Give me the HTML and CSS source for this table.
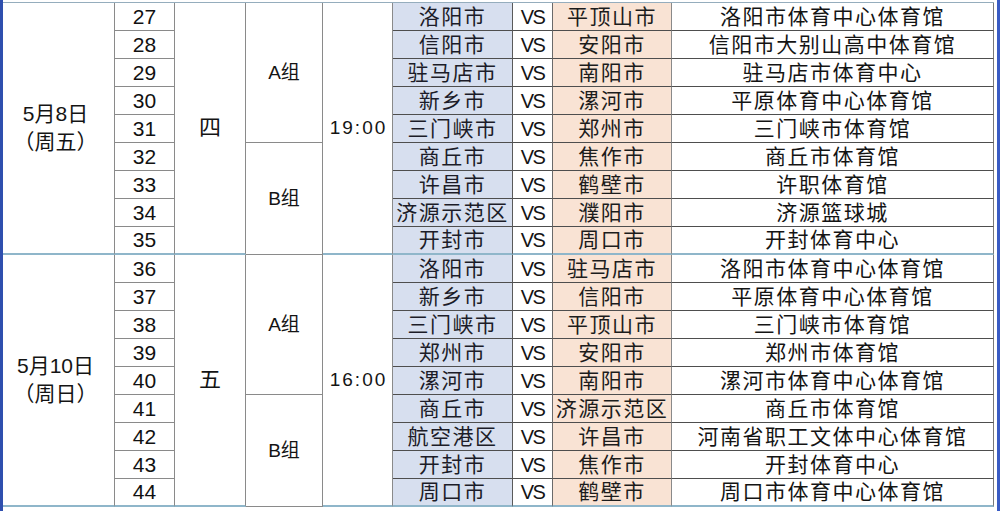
FILE: index.html
```html
<!DOCTYPE html>
<html lang="zh-CN">
<head>
<meta charset="utf-8">
<title>赛程表</title>
<link rel="stylesheet" href="styles.css">
</head>
<body>
<div class="frame">
<table class="sched">
<colgroup>
<col class="c-date"><col class="c-no"><col class="c-wk"><col class="c-grp"><col class="c-time"><col class="c-home"><col class="c-vs"><col class="c-away"><col class="c-venue">
</colgroup>
<tbody>
<tr>
<td class="date" rowspan="9">5月8日<br>（周五）</td>
<td class="no">27</td>
<td class="wk" rowspan="9">四</td>
<td class="grp" rowspan="5">A组</td>
<td class="time" rowspan="9">19:00</td>
<td class="home">洛阳市</td><td class="vs">VS</td><td class="away">平顶山市</td><td class="venue">洛阳市体育中心体育馆</td>
</tr>
<tr><td class="no">28</td><td class="home">信阳市</td><td class="vs">VS</td><td class="away">安阳市</td><td class="venue">信阳市大别山高中体育馆</td></tr>
<tr><td class="no">29</td><td class="home">驻马店市</td><td class="vs">VS</td><td class="away">南阳市</td><td class="venue">驻马店市体育中心</td></tr>
<tr><td class="no">30</td><td class="home">新乡市</td><td class="vs">VS</td><td class="away">漯河市</td><td class="venue">平原体育中心体育馆</td></tr>
<tr><td class="no">31</td><td class="home">三门峡市</td><td class="vs">VS</td><td class="away">郑州市</td><td class="venue">三门峡市体育馆</td></tr>
<tr><td class="no">32</td><td class="grp" rowspan="4">B组</td><td class="home">商丘市</td><td class="vs">VS</td><td class="away">焦作市</td><td class="venue">商丘市体育馆</td></tr>
<tr><td class="no">33</td><td class="home">许昌市</td><td class="vs">VS</td><td class="away">鹤壁市</td><td class="venue">许职体育馆</td></tr>
<tr><td class="no">34</td><td class="home">济源示范区</td><td class="vs">VS</td><td class="away">濮阳市</td><td class="venue">济源篮球城</td></tr>
<tr class="last"><td class="no">35</td><td class="home">开封市</td><td class="vs">VS</td><td class="away">周口市</td><td class="venue">开封体育中心</td></tr>

<tr class="first">
<td class="date" rowspan="9">5月10日<br>（周日）</td>
<td class="no">36</td>
<td class="wk" rowspan="9">五</td>
<td class="grp" rowspan="5">A组</td>
<td class="time" rowspan="9">16:00</td>
<td class="home">洛阳市</td><td class="vs">VS</td><td class="away">驻马店市</td><td class="venue">洛阳市体育中心体育馆</td>
</tr>
<tr><td class="no">37</td><td class="home">新乡市</td><td class="vs">VS</td><td class="away">信阳市</td><td class="venue">平原体育中心体育馆</td></tr>
<tr><td class="no">38</td><td class="home">三门峡市</td><td class="vs">VS</td><td class="away">平顶山市</td><td class="venue">三门峡市体育馆</td></tr>
<tr><td class="no">39</td><td class="home">郑州市</td><td class="vs">VS</td><td class="away">安阳市</td><td class="venue">郑州市体育馆</td></tr>
<tr><td class="no">40</td><td class="home">漯河市</td><td class="vs">VS</td><td class="away">南阳市</td><td class="venue">漯河市体育中心体育馆</td></tr>
<tr><td class="no">41</td><td class="grp" rowspan="4">B组</td><td class="home">商丘市</td><td class="vs">VS</td><td class="away">济源示范区</td><td class="venue">商丘市体育馆</td></tr>
<tr><td class="no">42</td><td class="home">航空港区</td><td class="vs">VS</td><td class="away">许昌市</td><td class="venue">河南省职工文体中心体育馆</td></tr>
<tr><td class="no">43</td><td class="home">开封市</td><td class="vs">VS</td><td class="away">焦作市</td><td class="venue">开封体育中心</td></tr>
<tr class="last"><td class="no">44</td><td class="home">周口市</td><td class="vs">VS</td><td class="away">鹤壁市</td><td class="venue">周口市体育中心体育馆</td></tr>
</tbody>
</table>
</div>
</body>
</html>
```
FILE: styles.css
```css
html, body {
  margin: 0;
  padding: 0;
  background: #ffffff;
}
.frame {
  box-sizing: border-box;
  width: 1000px;
  height: 511px;
  padding-top: 2px;
  border-left: 3px solid #2f4fae;
  border-right: 3px solid #3a5cc4;
  background: #ffffff;
}
.sched {
  table-layout: fixed;
  border-collapse: separate;
  border-spacing: 0;
  width: 991px;
  border-top: 1px solid #95adbd;
  font-family: "Liberation Sans", "Noto Sans CJK SC", sans-serif;
  color: #141414;
}
.c-date { width: 112px; }
.c-no { width: 60px; }
.c-wk { width: 71px; }
.c-grp { width: 77px; }
.c-time { width: 70px; }
.c-home { width: 120px; }
.c-vs { width: 40px; }
.c-away { width: 119px; }
.c-venue { width: 322px; }

.sched td {
  box-sizing: border-box;
  height: 28px;
  padding: 0;
  text-align: center;
  vertical-align: middle;
  white-space: nowrap;
  overflow: hidden;
  border-right: 1px solid #8a8a8a;
  border-bottom: 1px solid #8a8a8a;
  font-size: 21px;
  line-height: 26px;
}
.sched tr.last td { border-bottom: 2px solid #8fb6ca; }
.sched td.date,
.sched td.wk,
.sched td.time { border-bottom: 2px solid #8fb6ca; }
.sched td.date {
  line-height: 28px;
  text-align: center;
  padding-right: 6px;
}
.sched td.wk { font-size: 22px; }
.sched td.grp { font-size: 19px; }
.sched td.time {
  font-size: 19px;
  letter-spacing: 2px;
  padding-left: 2px;
}
.sched td.home {
  background: #d7dfef;
  color: #1c1c28;
  letter-spacing: 1.5px;
  border-bottom-color: #4e4e4e;
  border-right-color: #5a5a5a;
}
.sched td.vs {
  font-size: 20px;
  letter-spacing: -1.5px;
  border-bottom-color: #4e4e4e;
  border-right-color: #6a6a6a;
}
.sched td.away {
  background: #f9e3d4;
  color: #1c1c1c;
  letter-spacing: 1.5px;
  border-bottom-color: #4e4e4e;
  border-right-color: #8a8a8a;
}
.sched td.venue {
  letter-spacing: 1.5px;
  border-bottom-color: #4e4e4e;
  border-right-color: #7a7a7a;
}
.sched td.no { color: #111; }
```
